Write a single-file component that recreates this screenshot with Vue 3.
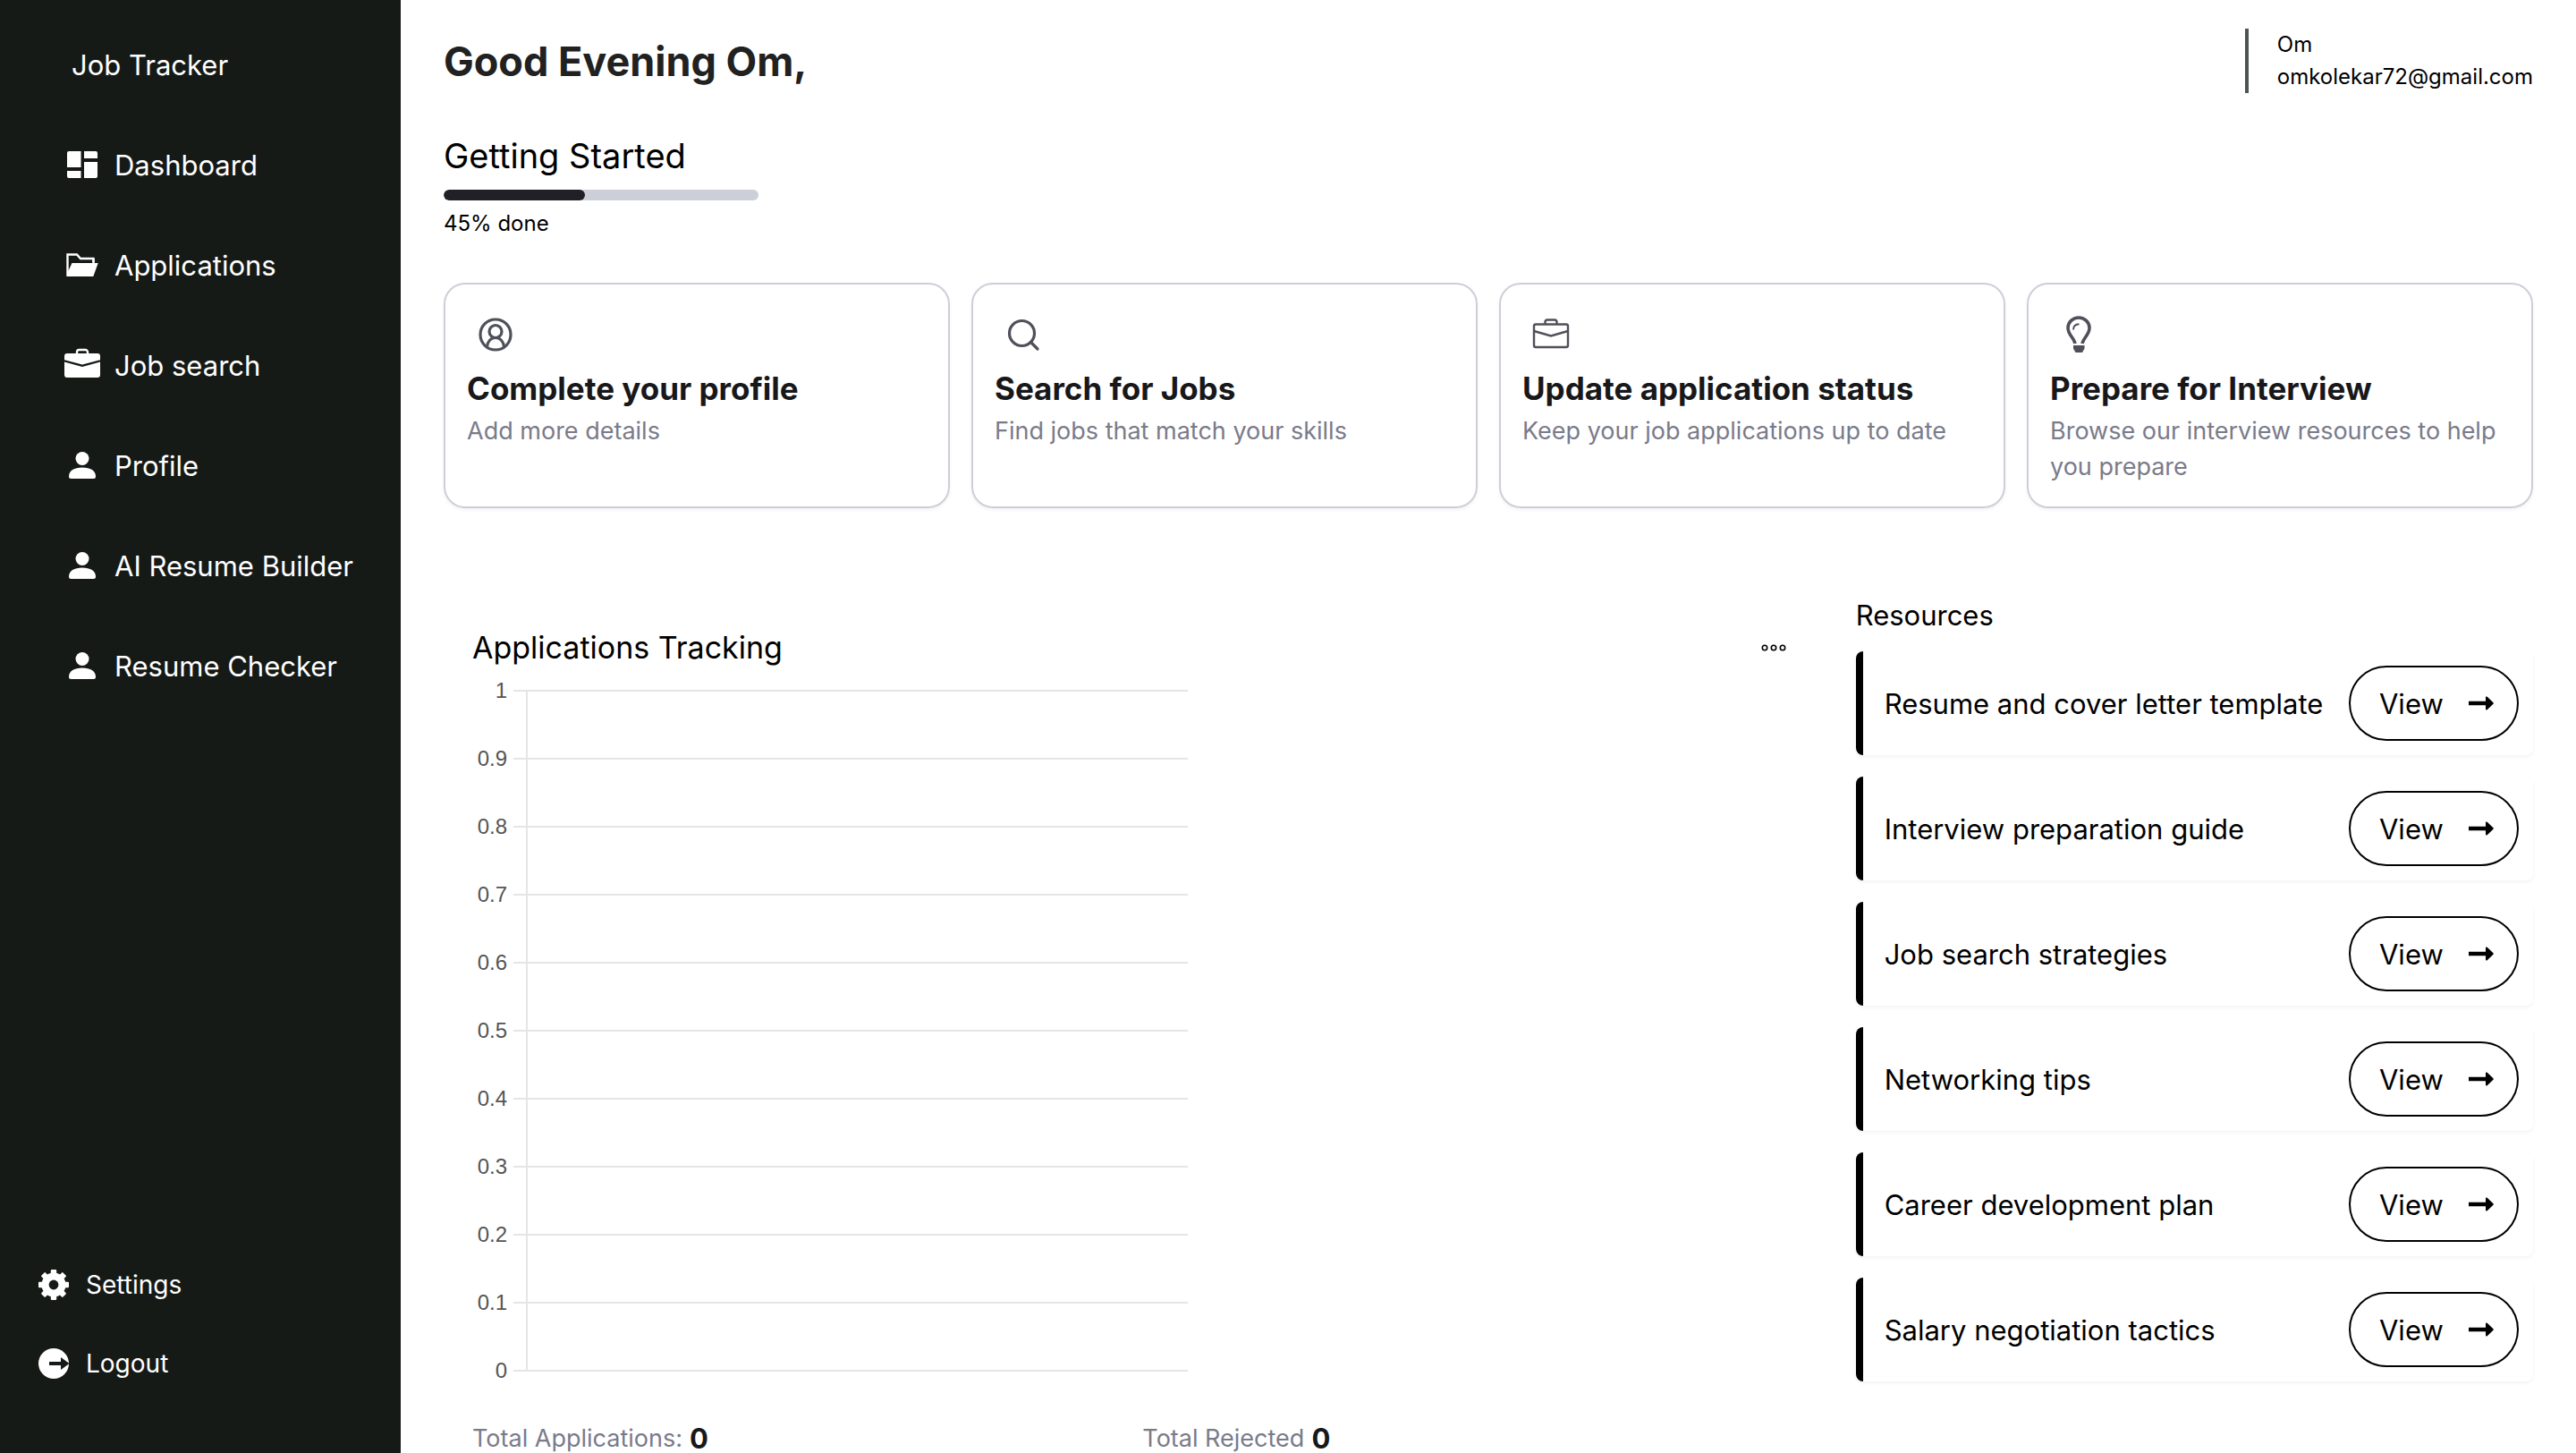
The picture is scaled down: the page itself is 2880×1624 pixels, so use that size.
<script setup>
const navItems = [
  { label: 'Dashboard', icon: 'dashboard' },
  { label: 'Applications', icon: 'folder' },
  { label: 'Job search', icon: 'briefcase' },
  { label: 'Profile', icon: 'person' },
  { label: 'AI Resume Builder', icon: 'person' },
  { label: 'Resume Checker', icon: 'person' },
]

const steps = [
  { title: 'Complete your profile', text: 'Add more details', icon: 'user' },
  { title: 'Search for Jobs', text: 'Find jobs that match your skills', icon: 'search' },
  { title: 'Update application status', text: 'Keep your job applications up to date', icon: 'case' },
  { title: 'Prepare for Interview', text: 'Browse our interview resources to help you prepare', icon: 'bulb' },
]

const resources = [
  'Resume and cover letter template',
  'Interview preparation guide',
  'Job search strategies',
  'Networking tips',
  'Career development plan',
  'Salary negotiation tactics',
]

const progress = 45

const ticks = Array.from({ length: 11 }, (_, i) => ({
  label: String((10 - i) / 10),
  y: 20 + i * 76,
}))
</script>

<template>
  <div class="layout">
    <aside class="sidebar">
      <a class="brand" href="#">Job Tracker</a>
      <nav class="nav">
        <a v-for="item in navItems" :key="item.label" class="nav-link" href="#">
          <svg class="nav-icon" viewBox="0 0 40 40" aria-hidden="true">
            <g v-if="item.icon === 'dashboard'" fill="currentColor">
              <path d="M5 5h13.500v18H3V7a2 2 0 0 1 2-2zM3 27h15.500v8H5a2 2 0 0 1-2-2zM22 5h13a2 2 0 0 1 2 2v6H22zM22 17h15v16a2 2 0 0 1-2 2H22z" />
            </g>
            <g v-else-if="item.icon === 'folder'">
              <path d="M3.500 31V8.500h10.500l4 4.500h14.500v4" fill="none" stroke="currentColor" stroke-width="2.400" />
              <path d="M8.500 18h29.200l-5.400 15H2.400V31z" fill="currentColor" />
              <path d="M32.500 13v6" stroke="currentColor" stroke-width="2.400" />
            </g>
            <g v-else-if="item.icon === 'briefcase'">
              <path d="M14 8V5.500a2.500 2.500 0 0 1 2.500-2.500h7a2.500 2.500 0 0 1 2.500 2.500V8" fill="none" stroke="currentColor" stroke-width="2.400" />
              <path d="M0 14.200V10a3 3 0 0 1 3-3h34a3 3 0 0 1 3 3v4.200L20 19.600z" fill="currentColor" />
              <path d="M0 16.600l20 5.400 20-5.400V31a3 3 0 0 1-3 3H3a3 3 0 0 1-3-3z" fill="currentColor" />
            </g>
            <g v-else fill="currentColor">
              <circle cx="20" cy="12.500" r="7.500" />
              <path d="M5 32.500C5 26 11 22.500 20 22.500s15 3.500 15 10a2.500 2.500 0 0 1-2.500 2.500h-25A2.500 2.500 0 0 1 5 32.500z" />
            </g>
          </svg>
          <span>{{ item.label }}</span>
        </a>
      </nav>
      <div class="account">
        <a class="account-link" href="#">
          <svg class="account-icon" viewBox="-20 -20 40 40" aria-hidden="true">
            <g fill="currentColor">
              <rect v-for="a in [0, 45, 90, 135]" :key="a" x="-3.200" y="-17" width="6.400" height="34" rx="1" :transform="`rotate(${a})`" />
              <circle r="13.500" />
            </g>
            <circle r="5.400" fill="#161a17" />
          </svg>
          <span>Settings</span>
        </a>
        <a class="account-link" href="#">
          <svg class="account-icon" viewBox="-20 -20 40 40" aria-hidden="true">
            <circle r="17" fill="currentColor" />
            <path d="M-5-2H8v-5l9.500 7L8 7V2H-5z" fill="#161a17" />
          </svg>
          <span>Logout</span>
        </a>
      </div>
    </aside>

    <main class="main">
      <header class="header">
        <h1 class="greeting">Good Evening Om,</h1>
        <div class="user">
          <span>Om</span>
          <span>omkolekar72@gmail.com</span>
        </div>
      </header>

      <section class="start">
        <h2 class="start-title">Getting Started</h2>
        <div class="bar" role="progressbar" aria-label="Getting started" :aria-valuenow="progress" aria-valuemin="0" aria-valuemax="100">
          <div class="bar-fill" :style="{ width: progress + '%' }"></div>
        </div>
        <p class="bar-label">{{ progress }}% done</p>
      </section>

      <section class="cards">
        <article v-for="step in steps" :key="step.title" class="card">
          <svg class="card-icon" viewBox="0 0 64 64" aria-hidden="true">
            <g v-if="step.icon === 'user'" fill="none" stroke="currentColor" stroke-width="3.200">
              <circle cx="32" cy="32" r="17" />
              <circle cx="32" cy="28.500" r="7" />
              <path d="M22.500 45.500C23 39.500 27 35.500 32 35.500s9 4 9.500 10" />
            </g>
            <g v-else-if="step.icon === 'search'" fill="none" stroke="currentColor" stroke-width="3.200" stroke-linecap="round">
              <circle cx="30.500" cy="30.500" r="14" />
              <path d="M40.500 40.500l7.500 7.500" />
            </g>
            <g v-else-if="step.icon === 'case'" fill="none" stroke="currentColor" stroke-width="2.400">
              <rect x="13" y="20.500" width="38" height="25.500" rx="2" />
              <path d="M25.500 20v-2a2.500 2.500 0 0 1 2.500-2.500h8a2.500 2.500 0 0 1 2.500 2.500v2M13 28l19 5.500L51 28" />
            </g>
            <g v-else fill="none" stroke="currentColor">
              <path d="M28 42c-1-6-8-10-8-17.500a12 11.500 0 0 1 24 0C44 32 37 36 36 42" stroke-width="3.600" />
              <path d="M26 26.500c0-4 2.500-6 6.500-6.200" stroke-width="2" />
              <path d="M26 44h12.500v3.500l-2.500 4.500h-7.500l-2.500-4.500z" fill="currentColor" stroke="none" />
            </g>
          </svg>
          <h3 class="card-title">{{ step.title }}</h3>
          <p class="card-text">{{ step.text }}</p>
        </article>
      </section>

      <div class="columns">
        <section class="tracking">
          <div class="tracking-head">
            <h2 class="tracking-title">Applications Tracking</h2>
            <button class="more" type="button" aria-label="More options">
              <svg class="more-icon" viewBox="0 0 32 32" aria-hidden="true">
                <g fill="none" stroke="currentColor" stroke-width="1.600">
                  <circle cx="6" cy="16" r="2.700" />
                  <circle cx="16" cy="16" r="2.700" />
                  <circle cx="26" cy="16" r="2.700" />
                </g>
              </svg>
            </button>
          </div>
          <svg class="chart" viewBox="0 0 800 800" role="img" aria-label="Applications chart">
            <g v-for="tick in ticks" :key="tick.label">
              <line class="grid-line" x1="46" :y1="tick.y" x2="800" :y2="tick.y" />
              <text class="tick" x="39" :y="tick.y + 8" text-anchor="end">{{ tick.label }}</text>
            </g>
            <line class="grid-line" x1="61" y1="20" x2="61" y2="780" />
          </svg>
          <div class="totals">
            <p class="total">Total Applications: <strong>0</strong></p>
            <p class="total">Total Rejected <strong>0</strong></p>
          </div>
        </section>

        <section class="resources">
          <h2 class="resources-title">Resources</h2>
          <ul class="resource-list">
            <li v-for="name in resources" :key="name" class="resource">
              <span>{{ name }}</span>
              <button class="view" type="button">
                <span>View</span>
                <svg class="view-icon" viewBox="0 0 32 32" aria-hidden="true">
                  <path d="M2 13.800h19V9.500a1 1 0 0 1 1.700-.7l6.800 6.500a1 1 0 0 1 0 1.400l-6.800 6.500a1 1 0 0 1-1.700-.7V18.200H2z" fill="currentColor" />
                </svg>
              </button>
            </li>
          </ul>
        </section>
      </div>
    </main>
  </div>
</template>

<style>
body {
  background: #fff;
}
</style>

<style scoped>
* {
  box-sizing: border-box;
  margin: 0;
}

.layout {
  display: flex;
  height: 100vh;
  overflow: hidden;
  color: #000;
  font-family: Inter, "Liberation Sans", sans-serif;
  font-size: 31px;
  line-height: 48px;
}

a {
  color: inherit;
  text-decoration: none;
}

button {
  font: inherit;
  color: inherit;
  background: none;
  cursor: pointer;
}

h1,
h2 {
  font-weight: 400;
}

svg {
  display: block;
  flex: none;
}

.sidebar {
  display: flex;
  flex-direction: column;
  flex: none;
  width: 448px;
  padding: 16px 0 56px;
  background: #161a17;
  color: #fff;
}

.brand,
.nav-link {
  display: flex;
  align-items: center;
  height: 112px;
}

.brand {
  padding-left: 80px;
}

.nav-link {
  gap: 16px;
  padding-left: 72px;
}

.brand,
.nav-link span,
.resource span {
  padding-top: 2px;
}

.nav-icon,
.account-icon {
  width: 40px;
  height: 40px;
}

.account {
  margin-top: auto;
  font-size: 28px;
}

.account-link {
  display: flex;
  align-items: center;
  gap: 16px;
  height: 88px;
  padding-left: 40px;
}

.main {
  flex: 1;
  min-width: 0;
  padding: 32px 48px;
}

.header {
  display: flex;
  align-items: center;
  justify-content: space-between;
}

.greeting {
  padding-top: 2px;
  color: #212121;
  font-size: 45px;
  font-weight: 700;
}

.user {
  display: flex;
  flex-direction: column;
  padding-left: 32px;
  border-left: 4px solid #4b5551;
  font-size: 24px;
  line-height: 36px;
}

.start {
  margin-top: 46px;
}

.start-title {
  font-size: 38px;
}

.bar {
  width: 352px;
  height: 12px;
  margin: 14px 0 8px;
  border-radius: 6px;
  background: #cdcfd8;
  overflow: hidden;
}

.bar-fill {
  height: 100%;
  border-radius: 6px;
  background: #212026;
}

.bar-label {
  font-size: 24px;
  line-height: 36px;
}

.cards {
  display: grid;
  grid-template-columns: repeat(4, 1fr);
  gap: 24px;
  margin-top: 48px;
}

.card {
  padding: 24px;
  border: 2px solid #cdcfd8;
  border-radius: 24px;
  box-shadow: 0 2px 4px rgba(0, 0, 0, 0.05);
}

.card-icon {
  width: 64px;
  height: 64px;
  color: #50505a;
}

.card-title {
  color: #18181b;
  font-size: 35px;
  font-weight: 700;
  line-height: 56px;
}

.card-text {
  color: #7a7b8a;
  font-size: 27px;
  line-height: 40px;
}

.columns {
  display: grid;
  grid-template-columns: 2fr 1fr;
  gap: 64px;
  margin-top: 96px;
}

.tracking {
  padding: 32px 0 0 32px;
}

.tracking-head {
  display: flex;
  align-items: center;
  justify-content: space-between;
}

.tracking-title {
  font-size: 34px;
}

.more {
  display: flex;
  align-items: center;
  justify-content: center;
  width: 56px;
  height: 56px;
  padding: 0;
  border: 0;
}

.more-icon {
  width: 32px;
  height: 32px;
}

.chart {
  width: 100%;
  max-width: 800px;
}

.grid-line {
  stroke: #e5e5e5;
  stroke-width: 2;
}

.tick {
  fill: #555;
  font-family: "Liberation Sans", Arial, sans-serif;
  font-size: 24px;
}

.totals {
  display: grid;
  grid-template-columns: 1fr 1fr;
  gap: 16px;
  margin-top: 40px;
}

.total {
  display: flex;
  align-items: center;
  gap: 8px;
  color: #7a7b8a;
  font-size: 27px;
  line-height: 32px;
}

.total strong {
  color: #18181b;
  font-size: 31px;
}

.resources-title {
  font-size: 31px;
}

.resource-list {
  display: flex;
  flex-direction: column;
  gap: 24px;
  margin-top: 16px;
  padding: 0;
  list-style: none;
}

.resource {
  display: flex;
  align-items: center;
  justify-content: space-between;
  padding: 16px 16px 16px 24px;
  border-left: 8px solid #000;
  border-radius: 8px;
  box-shadow: 0 2px 4px rgba(0, 0, 0, 0.05);
}

.view {
  display: flex;
  align-items: center;
  justify-content: space-between;
  width: 190px;
  height: 84px;
  padding: 0 24px 0 32px;
  border: 2px solid #000;
  border-radius: 42px;
}

.view-icon {
  width: 32px;
  height: 32px;
}
</style>
